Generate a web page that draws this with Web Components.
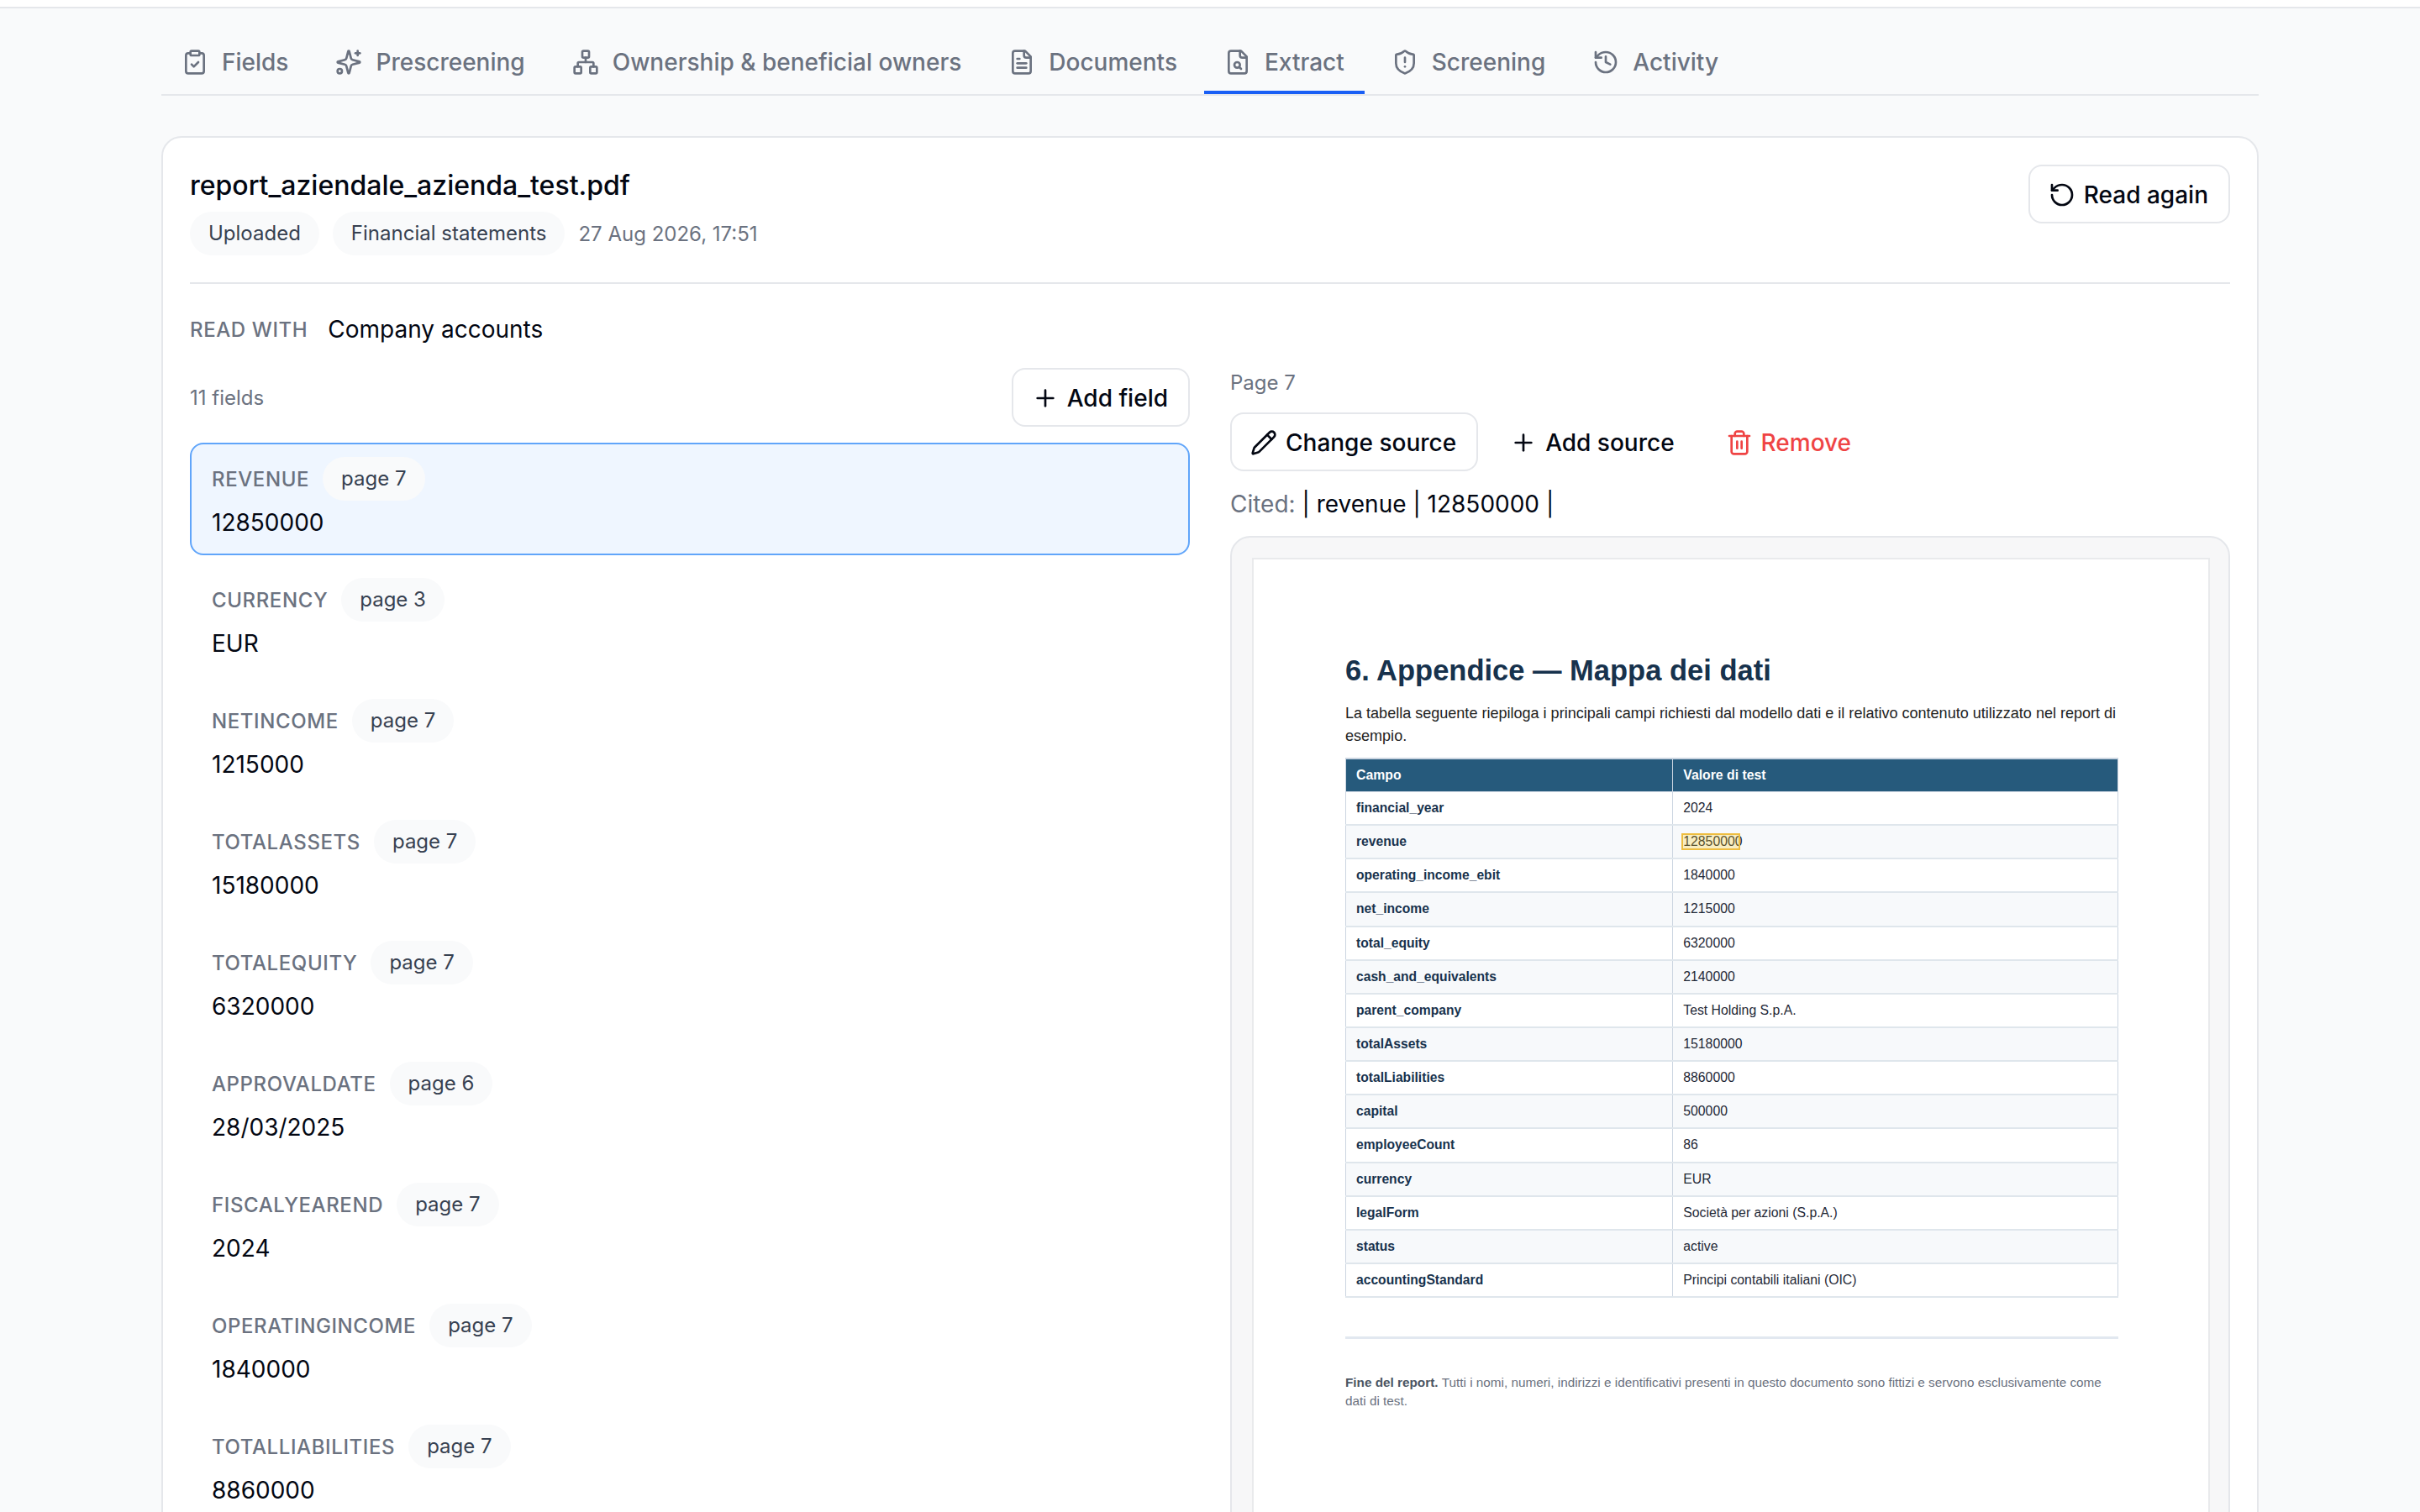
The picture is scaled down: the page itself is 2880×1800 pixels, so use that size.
<!DOCTYPE html>
<html lang="en">
<head>
<meta charset="utf-8">
<title>Extract</title>
<style>
html,body{margin:0;padding:0;height:1800px;overflow:hidden;background:#f9fafb;}
body{font-family:Inter,"Liberation Sans",sans-serif;color:#030712;}
</style>
</head>
<body>
<app-page></app-page>
<script>
const ICONS={
  fields:'<rect x="8" y="2" width="8" height="4" rx="1"/><path d="M16 4h2a2 2 0 0 1 2 2v14a2 2 0 0 1-2 2H6a2 2 0 0 1-2-2V6a2 2 0 0 1 2-2h2"/><path d="m9 14 2 2 4-4"/>',
  sparkles:'<path d="M9.937 15.5A2 2 0 0 0 8.5 14.063l-6.135-1.582a.5.5 0 0 1 0-.962L8.5 9.936A2 2 0 0 0 9.937 8.5l1.582-6.135a.5.5 0 0 1 .963 0L14.063 8.5A2 2 0 0 0 15.5 9.937l6.135 1.581a.5.5 0 0 1 0 .964L15.5 14.063a2 2 0 0 0-1.437 1.437l-1.582 6.135a.5.5 0 0 1-.963 0z"/><path d="M20 2v4"/><path d="M22 4h-4"/><circle cx="4" cy="20" r="2"/>',
  network:'<rect x="16" y="16" width="6" height="6" rx="1"/><rect x="2" y="16" width="6" height="6" rx="1"/><rect x="9" y="2" width="6" height="6" rx="1"/><path d="M5 16v-3a1 1 0 0 1 1-1h12a1 1 0 0 1 1 1v3"/><path d="M12 12V8"/>',
  file:'<path d="M15 2H6a2 2 0 0 0-2 2v16a2 2 0 0 0 2 2h12a2 2 0 0 0 2-2V7Z"/><path d="M14 2v4a2 2 0 0 0 2 2h4"/><path d="M10 9H8"/><path d="M16 13H8"/><path d="M16 17H8"/>',
  filesearch:'<path d="M15 2H6a2 2 0 0 0-2 2v16a2 2 0 0 0 2 2h12a2 2 0 0 0 2-2V7Z"/><path d="M14 2v4a2 2 0 0 0 2 2h4"/><circle cx="11.5" cy="14.5" r="2.5"/><path d="M13.3 16.3 15 18"/>',
  shield:'<path d="M20 13c0 5-3.5 7.5-7.66 8.95a1 1 0 0 1-.67-.01C7.5 20.5 4 18 4 13V6a1 1 0 0 1 1-1c2 0 4.5-1.2 6.24-2.72a1.17 1.17 0 0 1 1.52 0C14.51 3.81 17 5 19 5a1 1 0 0 1 1 1z"/><path d="M12 8v4"/><path d="M12 16h.01"/>',
  history:'<path d="M3 12a9 9 0 1 0 9-9 9.75 9.75 0 0 0-6.74 2.74L3 8"/><path d="M3 3v5h5"/><path d="M12 7v5l4 2"/>',
  rotate:'<path d="M3 12a9 9 0 1 0 9-9 9.75 9.75 0 0 0-6.74 2.74L3 8"/><path d="M3 3v5h5"/>',
  plus:'<path d="M5 12h14"/><path d="M12 5v14"/>',
  pencil:'<path d="M21.174 6.812a1 1 0 0 0-3.986-3.987L3.842 16.174a2 2 0 0 0-.5.83l-1.321 4.352a.5.5 0 0 0 .623.622l4.353-1.32a2 2 0 0 0 .83-.497z"/><path d="m15 5 4 4"/>',
  trash:'<path d="M3 6h18"/><path d="M19 6v14c0 1-1 2-2 2H7c-1 0-2-1-2-2V6"/><path d="M8 6V4c0-1 1-2 2-2h4c1 0 2 1 2 2v2"/><path d="M10 11v6"/><path d="M14 11v6"/>'
};

class UiIcon extends HTMLElement{
  connectedCallback(){
    if(this.shadowRoot) return;
    this.attachShadow({mode:'open'});
    this.shadowRoot.innerHTML=`
    <style>
    :host{display:block;width:32px;height:32px;flex:none;}
    svg{display:block;width:100%;height:100%;fill:none;stroke:currentColor;stroke-width:2;stroke-linecap:round;stroke-linejoin:round;}
    </style>
    <svg viewBox="0 0 24 24">${ICONS[this.getAttribute('name')]||''}</svg>`;
  }
}

class UiPill extends HTMLElement{
  constructor(){
    super();
    this.attachShadow({mode:'open'});
    this.shadowRoot.innerHTML=`
    <style>
    :host{display:inline-flex;align-items:center;height:52px;padding:0 22px;border-radius:26px;background:#f9fafb;color:#374151;font-size:24px;line-height:36px;white-space:nowrap;}
    </style>
    <slot></slot>`;
  }
}

class UiButton extends HTMLElement{
  constructor(){
    super();
    this.attachShadow({mode:'open'});
    this.shadowRoot.innerHTML=`
    <style>
    :host{display:inline-flex;align-items:center;gap:10px;box-sizing:border-box;height:70px;padding:1px 24px 0 22px;border:2px solid #e5e7eb;border-radius:16px;background:#fff;color:#030712;font-size:28px;font-weight:500;white-space:nowrap;}
    :host([ghost]){border-color:transparent;background:transparent;padding-right:21px;}
    :host([danger]){color:#ef4444;}
    </style>
    <slot></slot>`;
  }
}

class TabItem extends HTMLElement{
  constructor(){
    super();
    this.attachShadow({mode:'open'});
    this.shadowRoot.innerHTML=`
    <style>
    :host{display:flex;align-items:center;gap:16px;box-sizing:border-box;height:74px;padding:1px 24px 0;border-bottom:4px solid transparent;color:#6b7280;font-size:28px;font-weight:500;white-space:nowrap;}
    :host([active]){border-bottom-color:#1a5ff5;}
    </style>
    <slot></slot>`;
  }
}

class TabBar extends HTMLElement{
  constructor(){
    super();
    this.attachShadow({mode:'open'});
    this.shadowRoot.innerHTML=`
    <style>
    :host{display:flex;gap:8px;border-bottom:2px solid #e5e7eb;}
    </style>
    <slot></slot>`;
  }
}

class FieldRow extends HTMLElement{
  connectedCallback(){
    if(this.shadowRoot) return;
    this.attachShadow({mode:'open'});
    this.shadowRoot.innerHTML=`
    <style>
    :host{display:block;box-sizing:border-box;height:134px;padding:15px 24px 0;border:2px solid transparent;border-radius:16px;}
    :host([selected]){border-color:#60a5fa;background:#eff6ff;}
    .head{display:flex;align-items:center;gap:16px;height:52px;}
    .label{color:#6b7280;font-size:24px;font-weight:500;letter-spacing:.6px;text-transform:uppercase;}
    .value{margin-top:4px;font-size:28px;line-height:44px;color:#030712;}
    </style>
    <div class="head"><span class="label">${this.getAttribute('label')}</span><ui-pill>page ${this.getAttribute('page')}</ui-pill></div>
    <div class="value">${this.getAttribute('value')}</div>`;
  }
}

class DocHeader extends HTMLElement{
  constructor(){
    super();
    this.attachShadow({mode:'open'});
    this.shadowRoot.innerHTML=`
    <style>
    :host{display:flex;justify-content:space-between;align-items:flex-start;padding-bottom:32px;border-bottom:2px solid #e5e7eb;}
    h1{margin:0 0 7px;padding-top:1px;font-size:32px;line-height:48px;font-weight:500;color:#030712;}
    .meta{display:flex;align-items:center;gap:16px;}
    .date{color:#6b7280;font-size:24px;}
    </style>
    <div>
      <h1>report_aziendale_azienda_test.pdf</h1>
      <div class="meta"><ui-pill>Uploaded</ui-pill><ui-pill>Financial statements</ui-pill><span class="date">27 Aug 2026, 17:51</span></div>
    </div>
    <ui-button><ui-icon name="rotate"></ui-icon>Read again</ui-button>`;
  }
}

const FIELDS=[
  ['Revenue','7','12850000'],['Currency','3','EUR'],['NetIncome','7','1215000'],
  ['TotalAssets','7','15180000'],['TotalEquity','7','6320000'],['ApprovalDate','6','28/03/2025'],
  ['FiscalYearEnd','7','2024'],['OperatingIncome','7','1840000'],['TotalLiabilities','7','8860000']
];

class FieldList extends HTMLElement{
  constructor(){
    super();
    this.attachShadow({mode:'open'});
    this.shadowRoot.innerHTML=`
    <style>
    :host{display:block;}
    .top{display:flex;justify-content:space-between;align-items:center;margin-bottom:19px;}
    .count{color:#6b7280;font-size:24px;}
    .list{display:flex;flex-direction:column;gap:10px;}
    </style>
    <div class="top"><span class="count">11 fields</span><ui-button><ui-icon name="plus"></ui-icon>Add field</ui-button></div>
    <div class="list">${FIELDS.map((f,i)=>`<field-row ${i==0?'selected':''} label="${f[0]}" page="${f[1]}" value="${f[2]}"></field-row>`).join('')}</div>`;
  }
}

const ROWS=[
  ['financial_year','2024'],['revenue','12850000'],['operating_income_ebit','1840000'],['net_income','1215000'],
  ['total_equity','6320000'],['cash_and_equivalents','2140000'],['parent_company','Test Holding S.p.A.'],
  ['totalAssets','15180000'],['totalLiabilities','8860000'],['capital','500000'],['employeeCount','86'],
  ['currency','EUR'],['legalForm','Società per azioni (S.p.A.)'],['status','active'],
  ['accountingStandard','Principi contabili italiani (OIC)']
];

class PdfPage extends HTMLElement{
  constructor(){
    super();
    this.attachShadow({mode:'open'});
    this.shadowRoot.innerHTML=`
    <style>
    :host{display:block;box-sizing:border-box;height:1400px;padding:106px 107px 0 109px;border:2px solid #e9eaec;border-bottom:0;background:#fff;font-family:"Liberation Sans",Arial,sans-serif;color:#1f2937;}
    h2{margin:0;font-size:34.5px;line-height:52px;font-weight:700;color:#17324d;}
    p{margin:0;}
    .intro{margin-top:12px;font-size:18.05px;line-height:27px;color:#222;}
    table{width:100%;margin-top:12px;border-collapse:collapse;table-layout:fixed;font-size:15.8px;}
    th{height:38px;padding:0 12.5px;background:#265a7c;color:#fff;text-align:left;font-weight:700;border:1px solid #cbd5e1;border-top-width:2px;}
    td{height:38.15px;padding:0 12.5px;border-left:1.5px solid #cbd5e1;border-right:1.5px solid #cbd5e1;border-bottom:2px solid #dfe6ec;}
    tr:nth-child(even) td{background:#f7f9fb;}
    td:first-child{padding-left:12px;font-size:15.65px;font-weight:700;color:#17324d;}
    th:first-child{padding-left:12px;}
    th:first-child,td:first-child{width:42.3%;box-sizing:border-box;}
    .hit{position:relative;display:inline-block;}
    .hit::after{content:"";position:absolute;left:-2px;right:3px;top:-1px;bottom:-1px;border:2px solid #eebd3f;background:rgba(250,204,21,.25);}
    hr{margin:46px 0 0;border:0;border-top:3px solid #e2e8f0;}
    .foot{margin-top:41px;font-size:15.3px;line-height:22px;color:#6b7280;}
    .foot b{margin-right:.3px;color:#4b5563;}
    </style>
    <h2>6. Appendice — Mappa dei dati</h2>
    <p class="intro">La tabella seguente riepiloga i principali campi richiesti dal modello dati e il relativo contenuto utilizzato nel report di esempio.</p>
    <table>
      <thead><tr><th>Campo</th><th>Valore di test</th></tr></thead>
      <tbody>${ROWS.map(r=>`<tr><td>${r[0]}</td><td>${r[0]=='revenue'?`<span class="hit">${r[1]}</span>`:r[1]}</td></tr>`).join('')}</tbody>
    </table>
    <hr>
    <p class="foot"><b>Fine del report.</b> Tutti i nomi, numeri, indirizzi e identificativi presenti in questo documento sono fittizi e servono esclusivamente come dati di test.</p>`;
  }
}

class SourcePanel extends HTMLElement{
  constructor(){
    super();
    this.attachShadow({mode:'open'});
    this.shadowRoot.innerHTML=`
    <style>
    :host{display:block;}
    .page{color:#6b7280;font-size:24px;line-height:36px;margin-bottom:17px;}
    .actions{display:flex;align-items:center;gap:14px;}
    .cited{margin:17px 0 16px;font-size:28px;line-height:44px;color:#030712;}
    .cited span{color:#6b7280;}
    .viewer{box-sizing:border-box;height:1400px;padding:24px 22px 0 24px;border:2px solid #e5e7eb;border-radius:24px;background:#f7f7f8;}
    </style>
    <div class="page">Page 7</div>
    <div class="actions">
      <ui-button><ui-icon name="pencil"></ui-icon>Change source</ui-button>
      <ui-button ghost><ui-icon name="plus"></ui-icon>Add source</ui-button>
      <ui-button ghost danger><ui-icon name="trash"></ui-icon>Remove</ui-button>
    </div>
    <div class="cited"><span>Cited:</span> | revenue | 12850000 |</div>
    <div class="viewer"><pdf-page></pdf-page></div>`;
  }
}

class AppPage extends HTMLElement{
  constructor(){
    super();
    this.attachShadow({mode:'open'});
    this.shadowRoot.innerHTML=`
    <style>
    :host{display:block;}
    .topbar{height:8px;background:#fff;border-bottom:2px solid #e5e7eb;}
    main{padding:28px 192px 0;}
    .card{box-sizing:border-box;height:1800px;margin-top:48px;padding:32px;border:2px solid #e5e7eb;border-radius:24px;background:#fff;}
    .read{display:flex;align-items:center;gap:24px;height:44px;margin:32px 0 24px;}
    .read .k{color:#6b7280;font-size:24px;font-weight:500;letter-spacing:.6px;}
    .read .v{font-size:28px;color:#030712;}
    .cols{display:grid;grid-template-columns:1fr 1fr;gap:48px;}
    </style>
    <div class="topbar"></div>
    <main>
      <tab-bar>
        <tab-item><ui-icon name="fields"></ui-icon>Fields</tab-item>
        <tab-item><ui-icon name="sparkles"></ui-icon>Prescreening</tab-item>
        <tab-item><ui-icon name="network"></ui-icon>Ownership &amp; beneficial owners</tab-item>
        <tab-item><ui-icon name="file"></ui-icon>Documents</tab-item>
        <tab-item active><ui-icon name="filesearch"></ui-icon>Extract</tab-item>
        <tab-item><ui-icon name="shield"></ui-icon>Screening</tab-item>
        <tab-item><ui-icon name="history"></ui-icon>Activity</tab-item>
      </tab-bar>
      <div class="card">
        <doc-header></doc-header>
        <div class="read"><span class="k">READ WITH</span><span class="v">Company accounts</span></div>
        <div class="cols"><field-list></field-list><source-panel></source-panel></div>
      </div>
    </main>`;
  }
}

customElements.define('ui-icon',UiIcon);
customElements.define('ui-pill',UiPill);
customElements.define('ui-button',UiButton);
customElements.define('tab-item',TabItem);
customElements.define('tab-bar',TabBar);
customElements.define('field-row',FieldRow);
customElements.define('doc-header',DocHeader);
customElements.define('field-list',FieldList);
customElements.define('pdf-page',PdfPage);
customElements.define('source-panel',SourcePanel);
customElements.define('app-page',AppPage);
</script>
</body>
</html>
